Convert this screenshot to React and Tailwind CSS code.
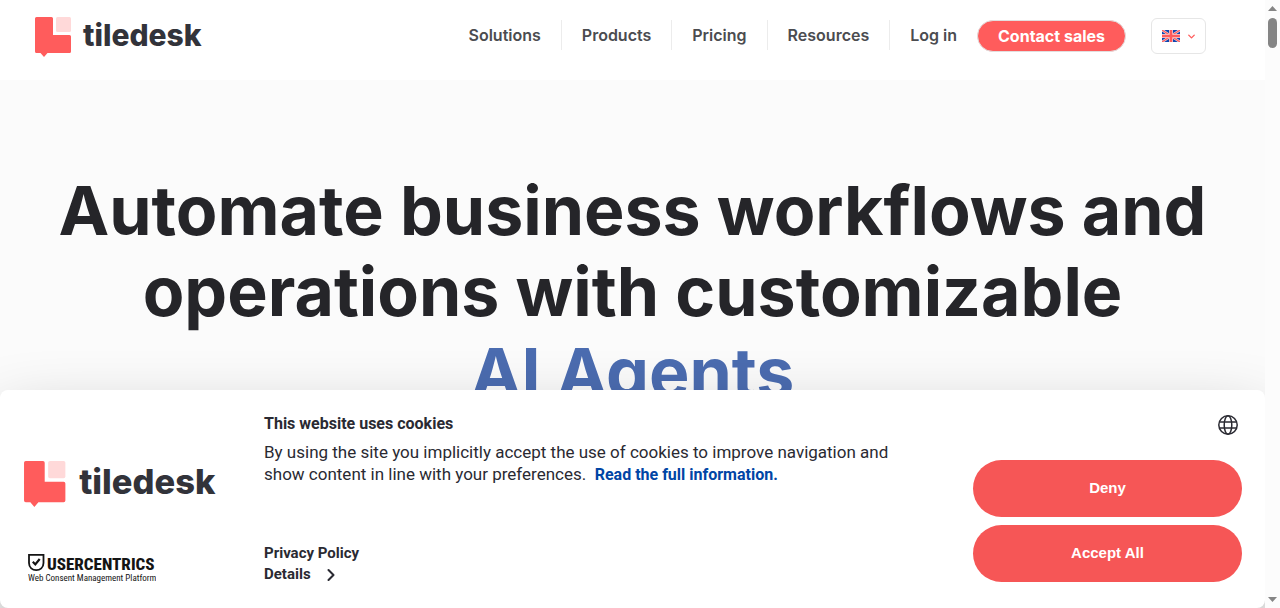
import React from "react";
import { ChevronDown, ChevronRight } from "lucide-react";

const NAV_ITEMS = ["Solutions", "Products", "Pricing", "Resources", "Log in"];

function TiledeskLogo({ className }) {
  return (
    <svg viewBox="0 0 168 40" className={className} role="img" aria-label="tiledesk">
      <path
        d="M1.5 0H16.5Q18 0 18 1.5V18H34.5Q36 18 36 19.5V34.5Q36 36 34.5 36H12.5L9 40L5.5 36H1.5Q0 36 0 34.5V1.5Q0 0 1.5 0Z"
        fill="#ff5c5c"
      />
      <rect x="21" y="0" width="15" height="15" rx="1.5" fill="#ffd9d9" />
      <text
        x="48"
        y="29"
        fontSize="30"
        fontWeight="800"
        fill="#32333a"
        className="font-['Inter',sans-serif]"
      >
        tiledesk
      </text>
    </svg>
  );
}

function UkFlag() {
  return (
    <svg viewBox="0 0 18 12" className="h-3 w-[18px]" aria-hidden>
      <rect width="18" height="12" fill="#0f47af" />
      <path d="M0 0L18 12M18 0L0 12" stroke="#f3d5da" strokeWidth="2.4" />
      <path d="M0 0L18 12M18 0L0 12" stroke="#ff5c5c" strokeWidth="1.2" />
      <path d="M9 0V12M0 6H18" stroke="#f3d5da" strokeWidth="4" />
      <path d="M9 0V12M0 6H18" stroke="#ff5c5c" strokeWidth="2.6" />
    </svg>
  );
}

function GlobeIcon() {
  return (
    <svg
      viewBox="0 0 20 20"
      className="h-5 w-5"
      fill="none"
      stroke="#2a2a32"
      strokeWidth="1.5"
      aria-hidden
    >
      <circle cx="10" cy="10" r="9.2" />
      <ellipse cx="10" cy="10" rx="3.8" ry="9.2" />
      <path d="M1.3 7H18.7M1.3 13H18.7" />
    </svg>
  );
}

function UsercentricsLogo() {
  return (
    <svg viewBox="0 0 128 31" className="w-32" role="img" aria-label="Usercentrics Web Consent Management Platform">
      <path
        d="M1 1.9H15.5V10C15.5 14.5 12 17.2 8.25 17.2S1 14.5 1 10Z"
        fill="none"
        stroke="#141414"
        strokeWidth="1.8"
      />
      <path d="M4.8 8.8L7.3 11.4L11.7 6" fill="none" stroke="#141414" strokeWidth="2.2" />
      <g className="font-['Roboto_Condensed','Roboto',sans-serif]" fill="#141414">
        <text x="19" y="17" fontSize="17" fontWeight="800">
          USERCENTRICS
        </text>
        <text x="0" y="28" fontSize="9">
          Web Consent Management Platform
        </text>
      </g>
    </svg>
  );
}

function Header() {
  return (
    <header className="flex h-20 items-start justify-between bg-white pl-[35px] pr-[59px]">
      <a href="#home" className="mt-[17px]">
        <TiledeskLogo className="w-[168px]" />
      </a>
      <div className="flex items-start">
        <nav className="mt-5 flex divide-x divide-[#ececec] text-base font-semibold text-[#4b4c50]">
          {NAV_ITEMS.map((item) => (
            <a key={item} href="#menu" className="px-5 leading-[30px]">
              {item}
            </a>
          ))}
        </nav>
        <a
          href="#contact"
          className="mt-5 h-8 rounded-full border border-[#e2dede] bg-[#ff5c5c] px-5 text-base leading-[30px] font-bold text-white"
        >
          Contact sales
        </a>
        <button
          type="button"
          aria-label="Choose language"
          className="mt-[18px] ml-[25px] flex h-9 w-[55px] items-center gap-1.5 rounded-md border border-[#e6e6e6] pl-2.5"
        >
          <UkFlag />
          <ChevronDown size={11} strokeWidth={3} className="text-[#ff5c5c]" aria-hidden />
        </button>
      </div>
    </header>
  );
}

function CookieBanner() {
  return (
    <section
      role="dialog"
      aria-labelledby="cookie-title"
      className="absolute inset-x-0 bottom-0 flex h-[218px] rounded-lg bg-white pr-[23px] pl-6 font-['Roboto',sans-serif] text-[#2a2a32] shadow-[0_32px_68px_rgba(0,0,0,0.3)]"
    >
      <div className="flex w-60 shrink-0 flex-col justify-between pt-[71px] pb-6">
        <TiledeskLogo className="w-[193px]" />
        <a href="#usercentrics" className="ml-1">
          <UsercentricsLogo />
        </a>
      </div>

      <div className="flex flex-1 flex-col justify-between pt-[22px] pb-[23px]">
        <div className="max-w-[660px]">
          <h2 id="cookie-title" className="text-base leading-6 font-bold">
            This website uses cookies
          </h2>
          <p className="mt-[5px] text-[17px] leading-[22px]">
            By using the site you implicitly accept the use of cookies to improve navigation and
            show content in line with your preferences.&nbsp;{" "}
            <a href="#information" className="text-base leading-[22px] font-bold text-[#0045a5]">
              Read the full information.
            </a>
          </p>
        </div>
        <div className="flex flex-col items-start text-[15px] leading-[21px] font-bold">
          <a href="#privacy">Privacy Policy</a>
          <button type="button" className="flex items-center gap-2.5">
            Details
            <ChevronRight size={20} strokeWidth={2.5} aria-hidden />
          </button>
        </div>
      </div>

      <div className="flex w-[269px] shrink-0 flex-col gap-2 pt-[25px] font-['Liberation_Sans',Arial,sans-serif] text-[15px] font-bold text-white">
        <button type="button" aria-label="Select language" className="mr-1 mb-[17px] self-end">
          <GlobeIcon />
        </button>
        <button type="button" className="h-[57px] rounded-full bg-[#f65656]">
          Deny
        </button>
        <button type="button" className="h-[57px] rounded-full bg-[#f65656]">
          Accept All
        </button>
      </div>
    </section>
  );
}

function ScrollRail() {
  return (
    <div className="flex w-[15px] shrink-0 flex-col items-center bg-[#fcfcfc] py-1.5" aria-hidden>
      <svg viewBox="0 0 9 5" className="h-[5px] w-[9px]" fill="#858585">
        <path d="M0 5L4.5 0L9 5Z" />
      </svg>
      <div className="mt-[7px] h-[30px] w-[9px] rounded-full bg-[#858585]" />
      <svg viewBox="0 0 9 5" className="mt-auto h-[5px] w-[9px]" fill="#858585">
        <path d="M0 0L4.5 5L9 0Z" />
      </svg>
    </div>
  );
}

export default function App() {
  return (
    <div className="flex h-screen overflow-hidden bg-[#fbfbfb] font-['Inter',sans-serif]">
      <div className="relative min-w-0 flex-1 overflow-hidden">
        <Header />
        <main className="px-6 pt-[90px]">
          <h1 className="text-center text-[68px] leading-[81px] font-bold text-[#252529]">
            Automate business workflows and
            <br />
            operations with customizable
            <br />
            <span className="text-[#4b6cb0]">AI Agents</span>
          </h1>
        </main>
        <CookieBanner />
      </div>
      <ScrollRail />
    </div>
  );
}
